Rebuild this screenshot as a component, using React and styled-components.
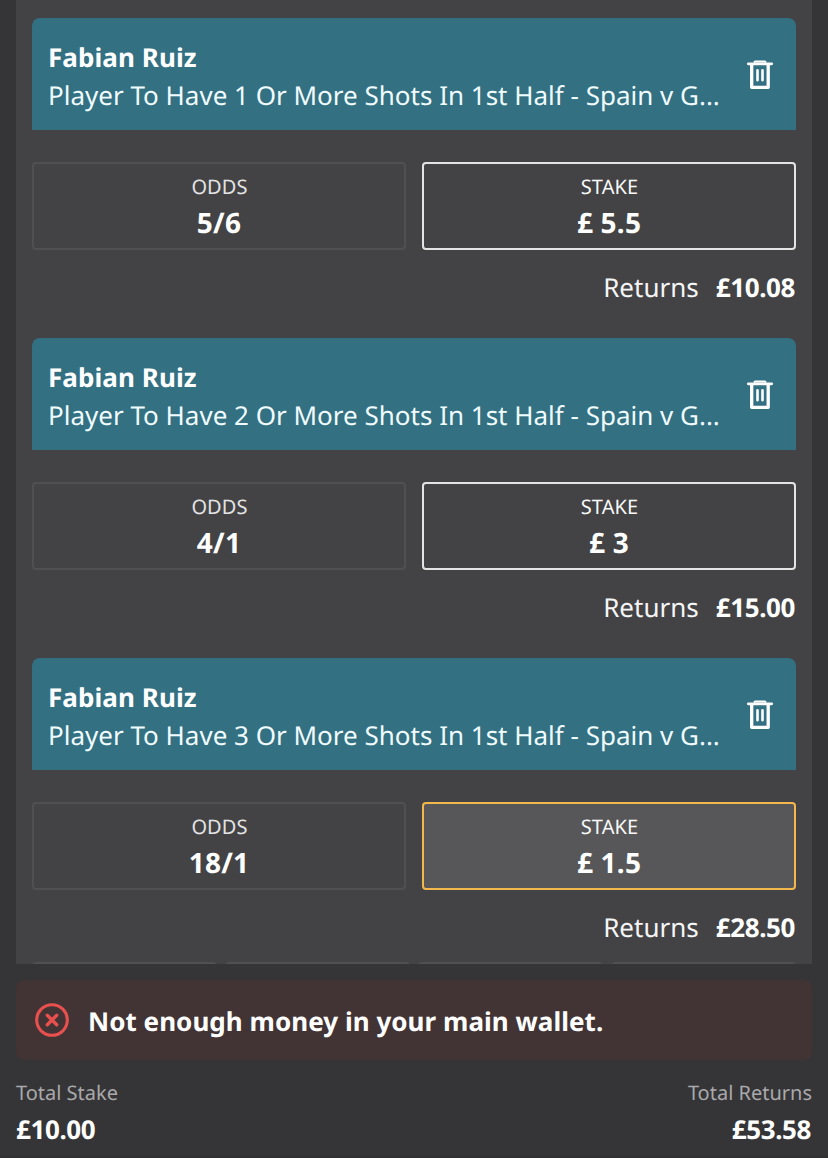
import React from 'react'
import styled, { createGlobalStyle } from 'styled-components'

const GlobalStyle = createGlobalStyle`
    * {
        box-sizing: border-box;
    }
    body {
        margin: 0;
        background-color: #353537;
        font-family: 'Noto Sans', sans-serif;
        text-rendering: geometricPrecision;
        color: #fff;
    }
    p {
        margin: 0;
    }
`
const Container = styled.div`
    display: flex;
    flex-direction: column;
    width: 828px;
    height: 1158px;
    padding: 0 16px;
    overflow: hidden;
    border-bottom: 2px solid #303032;
`
const BetList = styled.div`
    display: flex;
    flex-direction: column;
    flex-shrink: 0;
    height: 964px;
    padding: 18px 16px 0;
    overflow: hidden;
    background-color: #434345;
`
const Bet = styled.div`
    display: flex;
    flex-direction: column;
    flex-shrink: 0;
    height: 320px;
`
const BetHeader = styled.div`
    display: flex;
    justify-content: space-between;
    align-items: center;
    height: 112px;
    padding: 2px 22px 0 16px;
    border-radius: 8px 8px 0 0;
    background-color: #327082;
`
const BetInfo = styled.div`
    width: 674px;
    padding-top: 2px;
`
const PlayerName = styled.p`
    font-size: 26px;
    line-height: 38px;
    letter-spacing: 0.08px;
    font-weight: 700;
`
const Market = styled.p`
    font-size: 26px;
    line-height: 38px;
    white-space: nowrap;
    color: #f0fbfd;
`
const DeleteButton = styled.button`
    display: flex;
    padding: 0;
    border: none;
    background: none;
    color: #fff;
`
const Boxes = styled.div`
    display: grid;
    grid-template-columns: 1fr 1fr;
    gap: 16px;
    margin-top: 32px;
`
const borders = {
    odds: '#505052',
    stake: '#e4e4e5',
    active: '#f2b84b',
}
const Box = styled.div`
    display: flex;
    flex-direction: column;
    align-items: center;
    height: 88px;
    padding-top: 8px;
    border: 2px solid ${({ $type }) => borders[$type]};
    border-radius: 4px;
    background-color: ${({ $type }) => ($type === 'active' ? '#575759' : 'transparent')};
`
const BoxLabel = styled.p`
    padding-left: 1px;
    font-size: 20px;
    line-height: 30px;
    letter-spacing: 0.1px;
    color: ${({ $dim }) => ($dim ? '#e3e3e4' : '#f8f8f8')};
`
const BoxValue = styled.p`
    font-size: 28px;
    line-height: 42px;
    letter-spacing: 0.2px;
    font-weight: 700;
`
const Returns = styled.div`
    display: flex;
    justify-content: flex-end;
    gap: 17px;
    margin-top: 18px;
    padding-right: 1px;
    font-size: 26px;
    line-height: 38px;
`
const ReturnsLabel = styled.span`
    color: #f5f5f5;
`
const Amount = styled.span`
    font-size: 26px;
    letter-spacing: -0.4px;
    font-weight: 700;
`
const QuickStakes = styled.div`
    display: grid;
    grid-template-columns: repeat(4, 1fr);
    gap: 8px;
    flex-shrink: 0;
    margin-top: -16px;
`
const QuickStake = styled.div`
    height: 64px;
    border: 2px solid #505052;
    border-radius: 4px;
`
const Alert = styled.div`
    display: flex;
    align-items: center;
    gap: 19px;
    flex-shrink: 0;
    height: 80px;
    margin-top: 16px;
    padding-left: 19px;
    border-radius: 8px;
    background-color: #423334;
`
const AlertText = styled.p`
    padding-top: 2px;
    font-size: 26px;
    line-height: 36px;
    letter-spacing: 0.04px;
    font-weight: 700;
`
const Totals = styled.div`
    display: flex;
    justify-content: space-between;
    margin-top: 18px;
`
const Total = styled.div`
    display: flex;
    flex-direction: column;
    text-align: ${({ $end }) => ($end ? 'right' : 'left')};
`
const TotalLabel = styled.span`
    font-size: 20px;
    line-height: 30px;
    color: #a9a9ab;
`
const TotalAmount = styled(Amount)`
    margin-top: 2px;
    padding-right: 1px;
    line-height: 38px;
`

const bets = [
    { shots: 1, odds: '5/6', stake: '5.5', returns: '£10.08' },
    { shots: 2, odds: '4/1', stake: '3', returns: '£15.00' },
    { shots: 3, odds: '18/1', stake: '1.5', returns: '£28.50', active: true },
]

const TrashIcon = () => (
    <svg width="28" height="30" viewBox="0 0 28 30" fill="none" stroke="currentColor">
        <path d="M2.3 3.8H25.7" strokeWidth="2.8" strokeLinecap="round" />
        <path d="M8 2.4L9 1.5H19L20 2.4" strokeWidth="2" strokeLinejoin="round" />
        <path d="M5.7 4V27.3H22.2V4" strokeWidth="3.3" strokeLinejoin="round" />
        <path d="M11.5 10.4V20.2M16.5 10.4V20.2" strokeWidth="2.6" strokeLinecap="round" />
    </svg>
)

const ErrorIcon = () => (
    <svg width="34" height="34" viewBox="0 0 34 34" fill="none" stroke="#e8504f">
        <circle cx="17" cy="17" r="15.3" strokeWidth="3.1" />
        <path d="M12.3 12.3L21.7 21.7M21.7 12.3L12.3 21.7" strokeWidth="3.4" strokeLinecap="round" />
    </svg>
)

const SingleBet = ({ bet }) => {
    return (
        <Bet>
            <BetHeader>
                <BetInfo>
                    <PlayerName>Fabian Ruiz</PlayerName>
                    <Market>Player To Have {bet.shots} Or More Shots In 1st Half - Spain v G...</Market>
                </BetInfo>
                <DeleteButton aria-label="Delete">
                    <TrashIcon />
                </DeleteButton>
            </BetHeader>
            <Boxes>
                <Box $type="odds">
                    <BoxLabel $dim>ODDS</BoxLabel>
                    <BoxValue>{bet.odds}</BoxValue>
                </Box>
                <Box $type={bet.active ? 'active' : 'stake'}>
                    <BoxLabel>STAKE</BoxLabel>
                    <BoxValue>£ {bet.stake}</BoxValue>
                </Box>
            </Boxes>
            <Returns>
                <ReturnsLabel>Returns</ReturnsLabel>
                <Amount>{bet.returns}</Amount>
            </Returns>
        </Bet>
    )
}

const App = () => {
    return (
        <>
            <GlobalStyle />
            <Container>
                <BetList>
                    {bets.map((bet) => (
                        <SingleBet key={bet.shots} bet={bet} />
                    ))}
                    <QuickStakes>
                        <QuickStake />
                        <QuickStake />
                        <QuickStake />
                        <QuickStake />
                    </QuickStakes>
                </BetList>
                <Alert>
                    <ErrorIcon />
                    <AlertText>Not enough money in your main wallet.</AlertText>
                </Alert>
                <Totals>
                    <Total>
                        <TotalLabel>Total Stake</TotalLabel>
                        <TotalAmount>£10.00</TotalAmount>
                    </Total>
                    <Total $end>
                        <TotalLabel>Total Returns</TotalLabel>
                        <TotalAmount>£53.58</TotalAmount>
                    </Total>
                </Totals>
            </Container>
        </>
    )
}

export default App
